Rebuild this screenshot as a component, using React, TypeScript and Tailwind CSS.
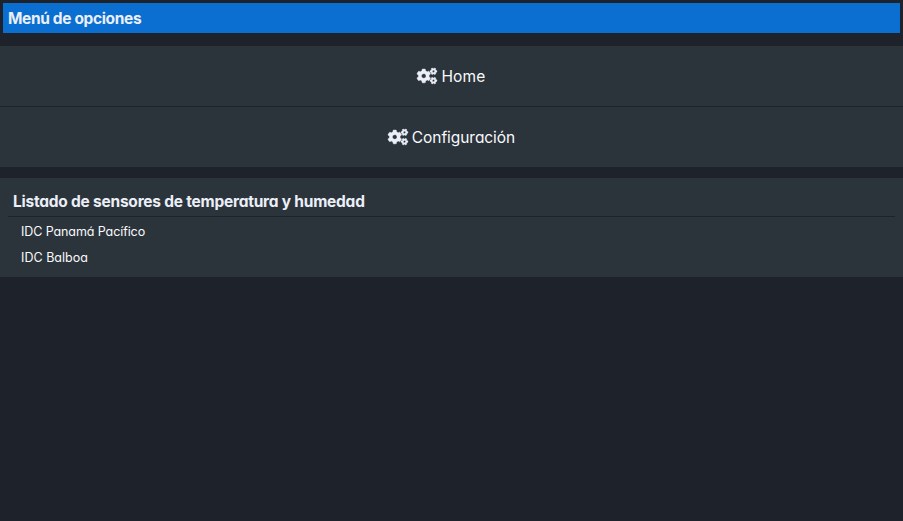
import { FaCogs } from "react-icons/fa";

const links = [
  { label: "Home", spacing: "tracking-[0.2px]" },
  { label: "Configuración", spacing: "tracking-[-0.06px]" },
];

const sensors = [
  { label: "IDC Panamá Pacífico", spacing: "tracking-[-0.09px]" },
  { label: "IDC Balboa", spacing: "tracking-[0.03px]" },
];

export default function App() {
  return (
    <div className="h-screen overflow-hidden bg-[#1e222a] pt-[3px] font-['Inter','Lato',sans-serif] text-[#ebeff8] [font-feature-settings:'cv11']">
      <header className="mx-[3px] flex h-[30px] items-center bg-[#0a6fd0] pt-0.5 pl-[5px]">
        <h1 className="text-[15.5px] leading-7 font-bold tracking-[-0.36px] whitespace-nowrap">Menú de opciones</h1>
      </header>

      <nav className="mt-[13px] bg-[#2c343b]">
        {links.map((link, i) => (
          <a
            key={link.label}
            className={`flex items-center justify-center gap-1 text-[15.5px] leading-5 text-[#f8f9fb] ${link.spacing} ${
              i === 0 ? "h-[61px] border-b border-[#1e222a]" : "h-[60px]"
            }`}
          >
            <FaCogs className="h-4 w-5 overflow-visible stroke-[#ebeff8] stroke-[12px] text-[#ebeff8]" />
            <span className="pt-0.5 whitespace-nowrap">{link.label}</span>
          </a>
        ))}
      </nav>

      <section className="mt-[11px] h-[99px] bg-[#2c343b] px-2 pt-2">
        <h2 className="flex h-[31px] items-center border-b border-[#1e222a] pt-0.5 pl-[5px] text-[15.5px] font-bold tracking-[-0.23px] whitespace-nowrap">
          Listado de sensores de temperatura y humedad
        </h2>
        <ul className="pt-[2px] pl-[13px] text-[12.5px] leading-[26px] text-[#f8f9fb]">
          {sensors.map((sensor) => (
            <li key={sensor.label} className={`whitespace-nowrap ${sensor.spacing}`}>
              {sensor.label}
            </li>
          ))}
        </ul>
      </section>
    </div>
  );
}
